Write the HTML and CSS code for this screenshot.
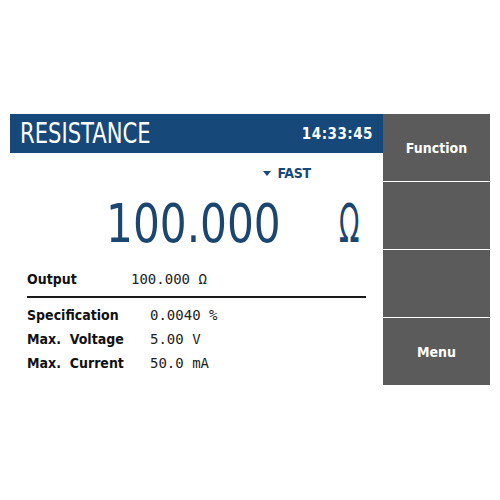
FILE: index.html
```html
<!DOCTYPE html>
<html>
<head>
<meta charset="utf-8">
<link rel="stylesheet" href="styles.css">
</head>
<body>
<div class="screen">
  <div class="main">
    <div class="titlebar">
      <span class="title">RESISTANCE</span>
      <span class="clock">14:33:45</span>
    </div>
    <div class="mode"><span class="tri"></span><span>FAST</span></div>
    <div class="reading">
      <span class="value">100.000</span>
      <span class="unit">Ω</span>
    </div>
    <div class="output-row">
      <span class="label">Output</span>
      <span class="val">100.000 Ω</span>
    </div>
    <div class="rule"></div>
    <div class="specs">
      <div class="spec"><span class="label">Specification</span><span class="val">0.0040 %</span></div>
      <div class="spec"><span class="label">Max.&nbsp; Voltage</span><span class="val">5.00 V</span></div>
      <div class="spec"><span class="label">Max.&nbsp; Current</span><span class="val">50.0 mA</span></div>
    </div>
  </div>
  <div class="side">
    <div class="btn">Function</div>
    <div class="btn"></div>
    <div class="btn"></div>
    <div class="btn">Menu</div>
  </div>
</div>
</body>
</html>
```

FILE: styles.css
```css
html, body {
  margin: 0;
  padding: 0;
  background: #ffffff;
}
body {
  width: 500px;
  height: 500px;
  font-family: "DejaVu Sans Condensed", "DejaVu Sans", sans-serif;
  color: #111111;
}
.screen {
  display: flex;
  padding: 114px 0 0 10px;
}
.main {
  width: 373px;
}
.titlebar {
  height: 39px;
  background: #17487a;
  color: #ffffff;
  display: flex;
  align-items: center;
  justify-content: space-between;
  padding: 0 10px 0 10px;
}
.title {
  display: inline-block;
  font-size: 29px;
  line-height: 1;
  transform: scaleX(0.81);
  transform-origin: left center;
}
.clock {
  font-size: 15px;
  font-weight: bold;
  letter-spacing: 0.5px;
}
.mode {
  display: flex;
  align-items: center;
  justify-content: flex-end;
  padding-right: 72px;
  height: 40px;
  color: #17487a;
  font-size: 14px;
  font-weight: bold;
  letter-spacing: -0.2px;
  gap: 6px;
}
.tri {
  width: 0;
  height: 0;
  border-left: 4px solid transparent;
  border-right: 4px solid transparent;
  border-top: 5px solid #17487a;
}
.reading {
  display: flex;
  align-items: center;
  height: 56px;
  padding-top: 3px;
  color: #1b4670;
  font-size: 54px;
  padding-left: 96px;
}
.value, .unit {
  display: inline-block;
  line-height: 1;
  transform-origin: left center;
}
.value {
  transform: scaleX(0.87);
}
.unit {
  margin-left: 32px;
  transform: scaleX(0.55);
}
.output-row {
  display: flex;
  align-items: center;
  height: 32px;
  padding-left: 17px;
  margin-top: 11px;
  font-size: 14px;
}
.label {
  font-weight: bold;
  width: 104px;
}
.val {
  font-family: "DejaVu Sans Mono", monospace;
  font-weight: normal;
  font-size: 14px;
  color: #222222;
}
.spec .label {
  width: 123px;
}
.rule {
  height: 2px;
  background: #1a1a1a;
  margin: 1px 0 0 17px;
  width: 339px;
}
.specs {
  padding: 5px 0 0 17px;
  display: flex;
  flex-direction: column;
}
.spec {
  display: flex;
  align-items: center;
  height: 24px;
  font-size: 14px;
}
.side {
  width: 107px;
  display: flex;
  flex-direction: column;
  gap: 1px;
}
.btn {
  height: 67px;
  background: #5b5b5b;
  color: #ffffff;
  font-size: 14px;
  font-weight: bold;
  display: flex;
  align-items: center;
  justify-content: center;
}
```
